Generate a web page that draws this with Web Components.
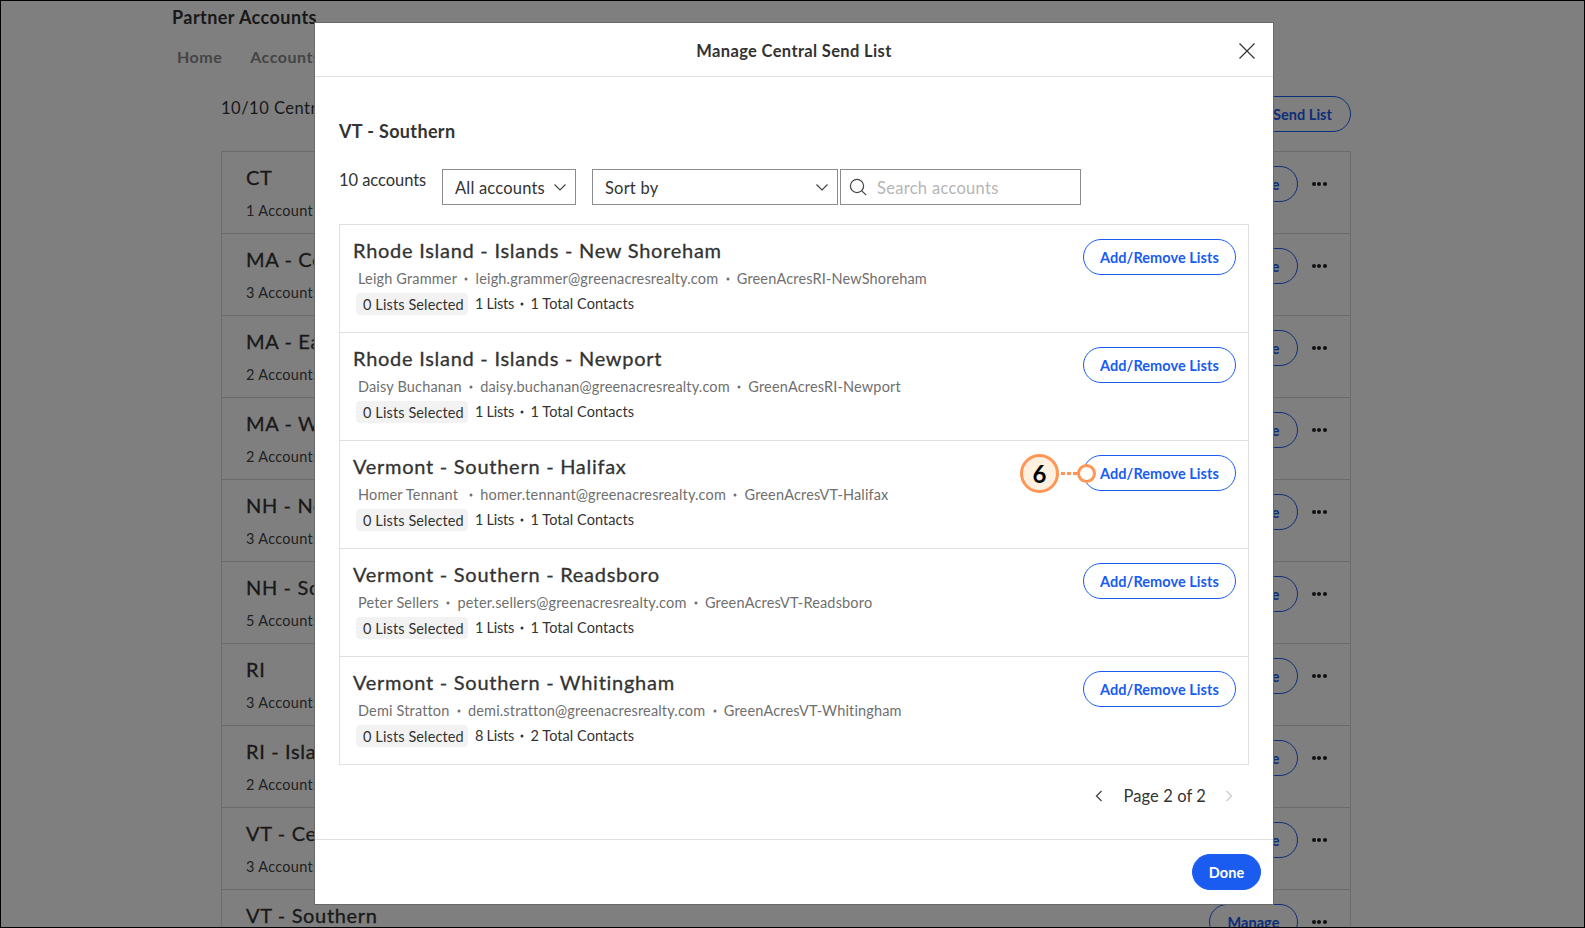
<!DOCTYPE html>
<html><head><meta charset="utf-8"><title>Manage Central Send List</title>
<style>
html,body{margin:0;padding:0;height:928px;overflow:hidden;background:#fff}
body{font-family:"Lato","Noto Sans",sans-serif;color:#333;position:relative}
</style></head><body>
<cc-frame>
  <bg-page></bg-page>
  <modal-dialog heading="Manage Central Send List" sub="VT - Southern">
    <list-row name="Rhode Island - Islands - New Shoreham" person="Leigh Grammer" mail="leigh.grammer@greenacresrealty.com" site="GreenAcresRI-NewShoreham" lists="1 Lists" total="1 Total Contacts"></list-row>
    <list-row name="Rhode Island - Islands - Newport" person="Daisy Buchanan" mail="daisy.buchanan@greenacresrealty.com" site="GreenAcresRI-Newport" lists="1 Lists" total="1 Total Contacts"></list-row>
    <list-row name="Vermont - Southern - Halifax" person="Homer Tennant" mail="homer.tennant@greenacresrealty.com" site="GreenAcresVT-Halifax" lists="1 Lists" total="1 Total Contacts" wide callout="6"></list-row>
    <list-row name="Vermont - Southern - Readsboro" person="Peter Sellers" mail="peter.sellers@greenacresrealty.com" site="GreenAcresVT-Readsboro" lists="1 Lists" total="1 Total Contacts"></list-row>
    <list-row name="Vermont - Southern - Whitingham" person="Demi Stratton" mail="demi.stratton@greenacresrealty.com" site="GreenAcresVT-Whitingham" lists="8 Lists" total="2 Total Contacts"></list-row>
  </modal-dialog>
</cc-frame>
<template id="t-pill"><style>
:host{display:inline-flex;box-sizing:border-box;height:36px;align-items:center;justify-content:center;border-radius:18px;border:1.2px solid var(--pill,#1a5cf0);color:var(--pill,#1a5cf0);background:var(--pill-bg,transparent);font-size:14.5px;font-weight:700;letter-spacing:.05px;white-space:nowrap}
</style><slot></slot></template>
<script>
const tpl=id=>document.getElementById(id).content.cloneNode(true);
class Base extends HTMLElement{
  render(html){(this.shadowRoot||this.attachShadow({mode:"open"})).innerHTML=html}
}
class PillButton extends Base{constructor(){super();this.attachShadow({mode:"open"}).appendChild(tpl("t-pill"))}}
customElements.define("pill-button",PillButton);

class CcFrame extends Base{connectedCallback(){this.render(`<style>
:host{display:block;box-sizing:border-box;width:1585px;height:928px;border:1px solid #000;position:relative;overflow:hidden;background:#fff}
</style><slot></slot>`);}}
customElements.define("cc-frame",CcFrame);

class AccountRow extends Base{connectedCallback(){
  const n=this.getAttribute("name"),c=this.getAttribute("count");
  this.render(`<style>
:host{display:flex;box-sizing:border-box;height:82px;border-bottom:1px solid #d6d6d6;padding:13px 19px 0 24px;justify-content:space-between;align-items:flex-start}
.l{white-space:nowrap}
.n{font-size:20px;font-weight:400;-webkit-text-stroke:.3px currentColor;letter-spacing:.65px;line-height:24px;margin-bottom:12px;color:#333}
.c{font-size:14.5px;letter-spacing:.3px;line-height:20px;color:#444}
.r{display:flex;align-items:center;gap:9px;margin-top:1px;--pill:#1a5cf0}
pill-button{width:89px}
.d{display:flex;gap:1.5px;width:24px;justify-content:center}
.d i{width:4px;height:4px;border-radius:50%;background:#222}
</style><div class="l"><div class="n">${n}</div>${c?`<div class="c">${c}</div>`:""}</div>
<div class="r"><pill-button>Manage</pill-button><span class="d"><i></i><i></i><i></i></span></div>`);}}
customElements.define("account-row",AccountRow);

class BgPage extends Base{connectedCallback(){
  const rows=[["CT","1 Account"],["MA - Central","3 Accounts"],["MA - Eastern","2 Accounts"],["MA - Western","2 Accounts"],["NH - Northern","3 Accounts"],["NH - Southern","5 Accounts"],["RI","3 Accounts"],["RI - Islands","2 Accounts"],["VT - Central","3 Accounts"],["VT - Southern",""]];
  this.render(`<style>
:host{display:block;position:absolute;inset:0;color:#333}
.wrap{padding:4px 0 0 171px;width:1180px}
h1{margin:0;font-size:18px;font-weight:700;letter-spacing:.45px;line-height:24px;color:#333}
nav{display:flex;gap:28px;margin:16px 0 0 5px;font-size:16px;font-weight:700;letter-spacing:.5px;line-height:24px;color:#8a8a8a}
.top{display:flex;justify-content:space-between;align-items:center;margin:27px 0 19px 49px;width:1130px;font-size:16.5px;letter-spacing:.5px;--pill:#1a5cf0}
.top span{margin-bottom:12px}
.top pill-button{padding:0 18px;letter-spacing:.05px}
.list{margin-left:49px;width:1130px;box-sizing:border-box;border:1px solid #d6d6d6}
</style><div class="wrap"><h1>Partner Accounts</h1><nav><span>Home</span><span>Accounts</span></nav>
<div class="top"><span>10/10 Central Send Lists</span><pill-button>Manage Central Send List</pill-button></div>
<div class="list">${rows.map(r=>`<account-row name="${r[0]}" ${r[1]?`count="${r[1]}"`:""}></account-row>`).join("")}</div></div>`);
}}
customElements.define("bg-page",BgPage);

const chev=`<svg width="14" height="14" viewBox="0 0 14 14" fill="none" stroke="#444" stroke-width="1.2"><path d="M1.5 4.5 7 10l5.5-5.5"/></svg>`;
class SelectBox extends Base{connectedCallback(){
  this.render(`<style>
:host{display:flex;box-sizing:border-box;height:36px;border:1px solid #8c8c8c;align-items:center;justify-content:space-between;padding:0 8px 0 12px;font-size:16.5px;letter-spacing:.2px;color:#333}
span{padding-top:1px}
svg{flex:none}
</style><span><slot></slot></span>${chev}`);}}
customElements.define("select-box",SelectBox);

class SearchBox extends Base{connectedCallback(){
  this.render(`<style>
:host{display:flex;box-sizing:border-box;height:36px;border:1px solid #8c8c8c;align-items:center;padding:0 0 0 8px;gap:10px;font-size:16.5px;letter-spacing:.3px;color:#b5b5b5}
span{padding-top:1px}
</style><svg width="18" height="18" viewBox="0 0 18 18" fill="none" stroke="#444" stroke-width="1.2"><circle cx="8" cy="8" r="6.6"/><path d="m12.8 12.8 4.4 4.4"/></svg><span><slot></slot></span>`);}}
customElements.define("search-box",SearchBox);

class ListRow extends Base{connectedCallback(){
  const a=k=>this.getAttribute(k),w=this.hasAttribute("wide");
  const co=a("callout");
  this.render(`<style>
:host{display:flex;box-sizing:border-box;height:108px;border-bottom:1px solid #e0e0e0;padding:12px 12px 0 13px;justify-content:space-between;align-items:flex-start;position:relative}
:host(:last-child){height:107px;border-bottom:0}
.n{font-size:20px;font-weight:400;-webkit-text-stroke:.3px currentColor;letter-spacing:.73px;line-height:26px;color:#333}
.d{display:flex;align-items:center;margin:6px 0 0 5px;font-size:14.5px;letter-spacing:.16px;line-height:20px;color:#6f6f6f;white-space:nowrap}
.d i,.s i{font-style:normal;width:4px;height:4px;border-radius:50%;background:currentColor;transform:scale(.75)}
.d i{margin:0 7.25px}
.s i{margin:0 6.5px 0 6px}
.d i.w{margin-left:11px}
.s{display:flex;align-items:center;margin:4px 0 0 3px;font-size:14.5px;letter-spacing:.05px;line-height:20px;color:#333;white-space:nowrap}
.s .ls{letter-spacing:-.25px}
.b{display:inline-block;box-sizing:border-box;height:22px;line-height:23px;padding:0 7px;background:#f2f2f2;border-radius:4px;margin-right:7px;width:112px;letter-spacing:.11px}
pill-button{width:153px;margin-top:2px}
.co{position:absolute;left:680px;top:13px;display:flex;align-items:center}
.num{box-sizing:border-box;width:39px;height:39px;border-radius:50%;border:3px solid #ff9656;background:#fff0e0;color:#000;font-size:24px;font-weight:700;display:flex;align-items:center;justify-content:center}
.dots{width:18px;height:3px;background:repeating-linear-gradient(90deg,#ff9656 0 4px,transparent 4px 6px);background-position:2px 0}
.ring{box-sizing:border-box;width:19px;height:19px;border-radius:50%;border:3.5px solid #ff9656;background:#fff}
</style><div><div class="n">${a("name")}</div>
<div class="d"><span>${a("person")}</span><i class="${w?"w":""}"></i><span>${a("mail")}</span><i></i><span>${a("site")}</span></div>
<div class="s"><span class="b">0 Lists Selected</span><span class="ls">${a("lists")}</span><i></i><span>${a("total")}</span></div></div>
<pill-button>Add/Remove Lists</pill-button>
${co?`<div class="co"><span class="num">${co}</span><span class="dots"></span><span class="ring"></span></div>`:""}`);
}}
customElements.define("list-row",ListRow);

class PagerBar extends Base{connectedCallback(){
  this.render(`<style>
:host{display:flex;align-items:center;justify-content:flex-end;font-size:16.5px;letter-spacing:.1px;color:#333}
span{margin:0 19px 0 20px}
</style><svg width="8" height="12" viewBox="0 0 8 12" fill="none" stroke="#444" stroke-width="1.3"><path d="M6.5 1 1.5 6l5 5"/></svg><span><slot></slot></span><svg width="8" height="12" viewBox="0 0 8 12" fill="none" stroke="#ccc" stroke-width="1.3"><path d="M1.5 1 6.5 6l-5 5"/></svg>`);}}
customElements.define("pager-bar",PagerBar);

class ModalDialog extends Base{connectedCallback(){
  this.render(`<style>
:host{display:block}
.ov{position:absolute;inset:0;background:rgba(0,0,0,.5)}
.m{position:absolute;left:314px;top:22px;width:958px;height:881px;background:#fff;display:flex;flex-direction:column;box-shadow:0 0 0 1px #6a6a6a}
header{flex:none;height:54px;box-sizing:border-box;border-bottom:1.5px solid #e0e0e0;padding-top:2px;display:flex;align-items:center;justify-content:center;position:relative;font-size:16.5px;font-weight:700;letter-spacing:.35px;color:#333}
header svg{position:absolute;right:18px;top:20px}
main{flex:1;padding:0 24px}
h2{margin:41.5px 0 0;font-size:18px;font-weight:700;letter-spacing:.35px;line-height:24px;color:#333}
.f{display:flex;margin-top:26.5px;font-size:16.5px;letter-spacing:-.05px;height:36px}
.f .c{width:103px;line-height:22px;color:#333}
select-box.a{width:134px;margin-right:16px}
select-box.b{width:246px;margin-right:2px}
search-box{width:241px}
.t{margin-top:19px;width:910px;box-sizing:border-box;border:1.5px solid #e0e0e0}
pager-bar{margin:19px 16px 0 0;height:24px}
footer{flex:none;height:65px;box-sizing:border-box;border-top:1.5px solid #e0e0e0;display:flex;justify-content:flex-end;padding:14px 12px 0 0}
footer pill-button{--pill:#fff;--pill-bg:#1a5cf0;width:69px;border-color:#1a5cf0}
</style><div class="ov"></div><div class="m"><header>${this.getAttribute("heading")}<svg width="16" height="16" viewBox="0 0 16 16" fill="none" stroke="#333" stroke-width="1.2"><path d="M.5.5l15 15M15.5.5l-15 15"/></svg></header>
<main><h2>${this.getAttribute("sub")}</h2>
<div class="f"><span class="c">10 accounts</span><select-box class="a">All accounts</select-box><select-box class="b">Sort by</select-box><search-box>Search accounts</search-box></div>
<div class="t"><slot></slot></div>
<pager-bar>Page 2 of 2</pager-bar></main>
<footer><pill-button>Done</pill-button></footer></div>`);}}
customElements.define("modal-dialog",ModalDialog);
</script>
</body></html>
